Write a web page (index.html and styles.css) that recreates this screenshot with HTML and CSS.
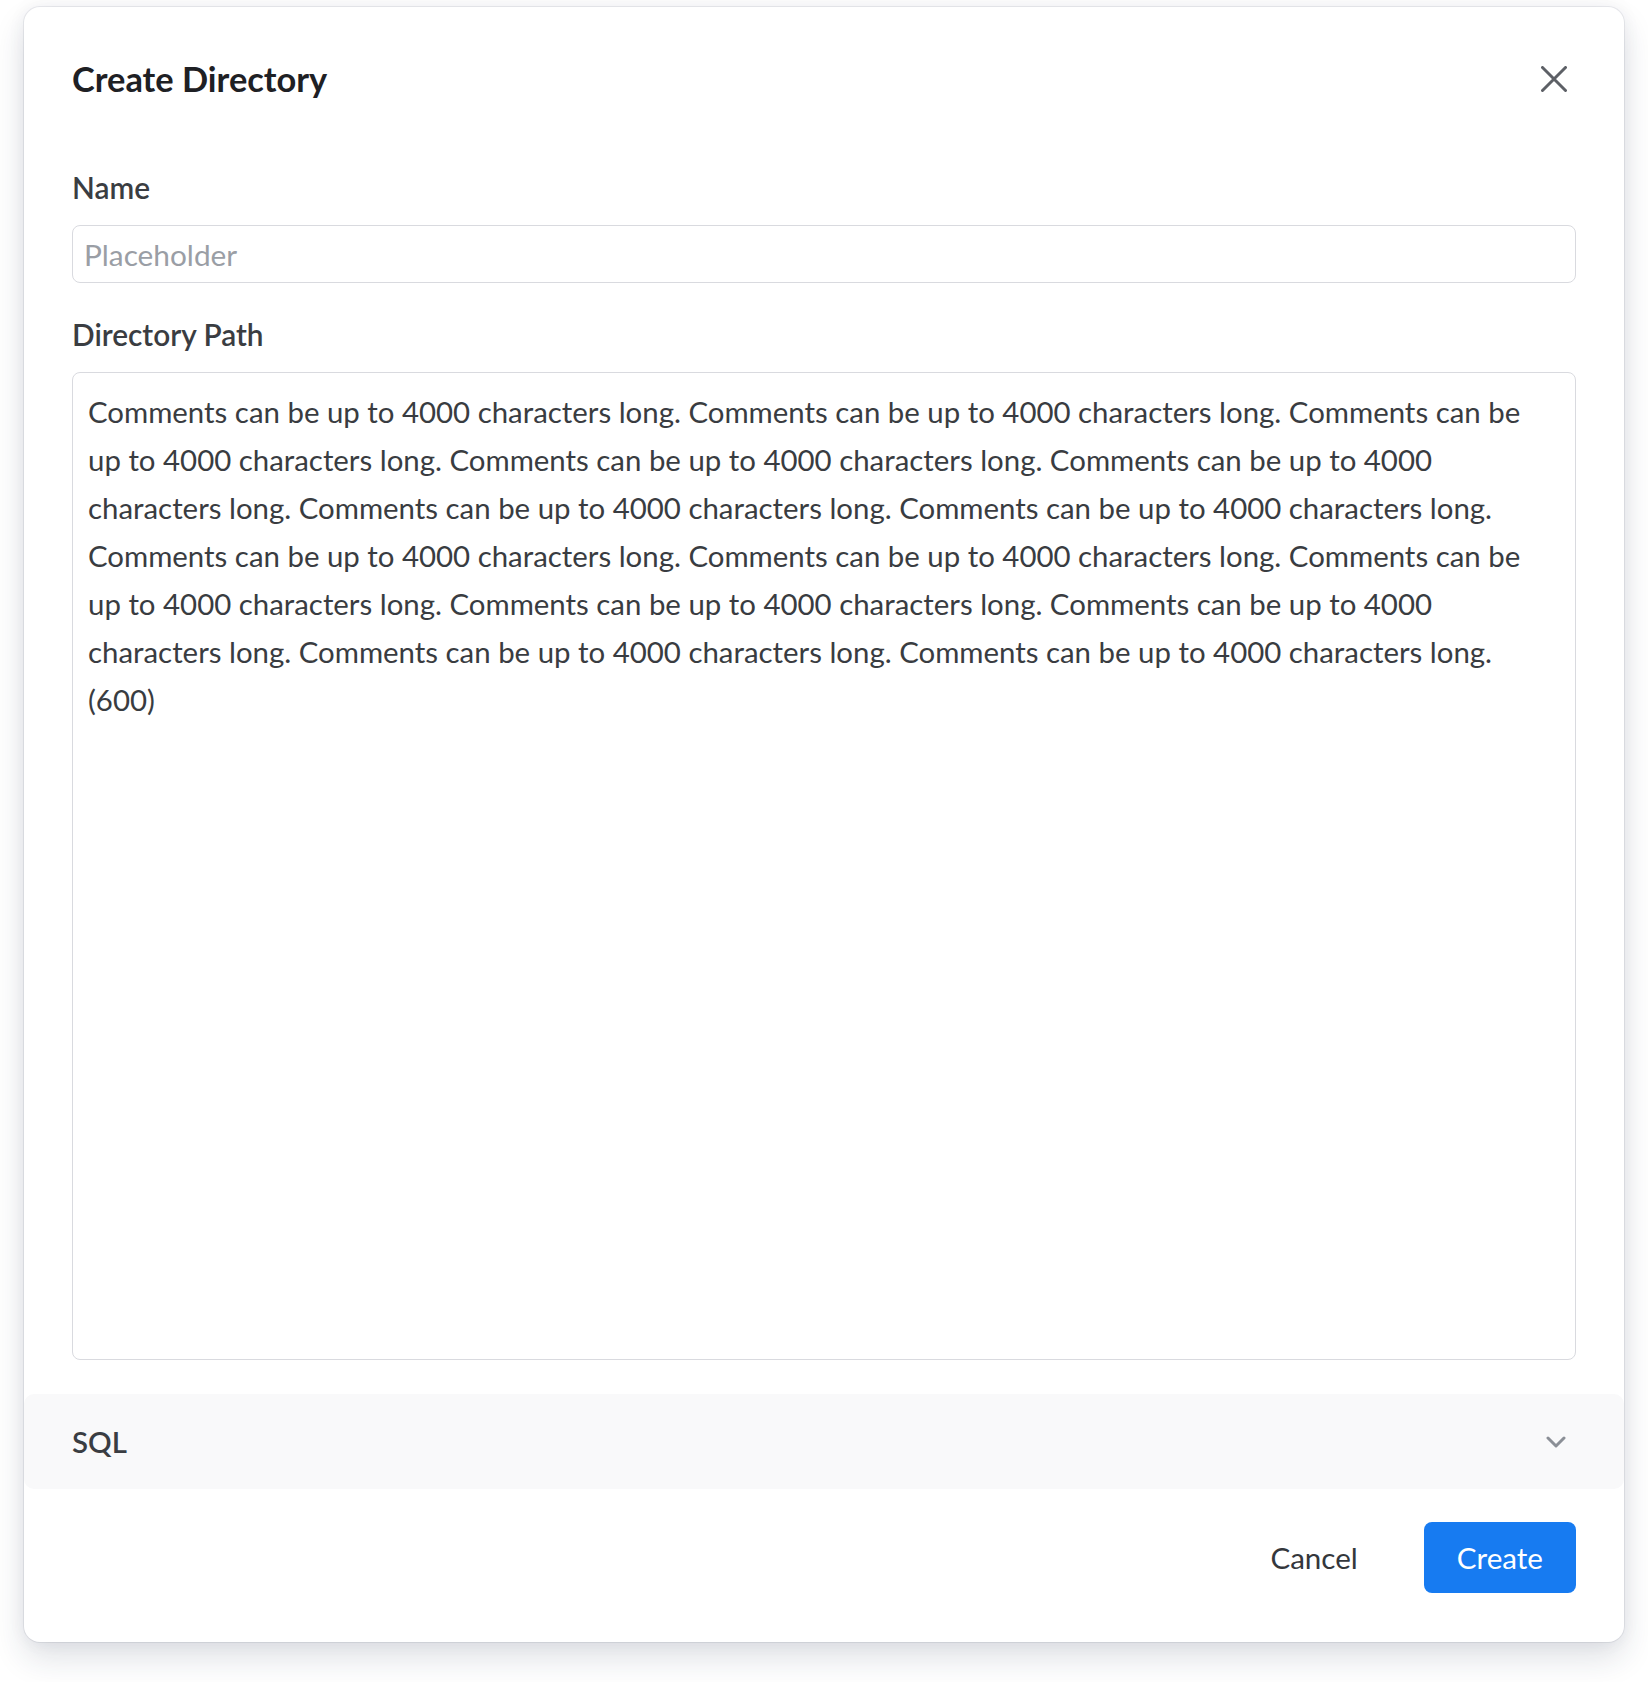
FILE: index.html
```html
<!DOCTYPE html>
<html lang="en">
<head>
<meta charset="utf-8">
<title>Create Directory</title>
<link rel="stylesheet" href="styles.css">
</head>
<body>
<div class="modal">
  <div class="modal-header">
    <h2 class="modal-title">Create Directory</h2>
    <button class="close-btn" type="button" aria-label="Close">
      <svg width="26" height="26" viewBox="0 0 26 26" fill="none" stroke="currentColor" stroke-width="3" stroke-linecap="round">
        <path d="M1.5 1.5 L24.5 24.5 M24.5 1.5 L1.5 24.5"/>
      </svg>
    </button>
  </div>
  <div class="modal-body">
    <label class="field-label" for="name">Name</label>
    <input class="text-input" id="name" type="text" placeholder="Placeholder">
    <label class="field-label field-label-spaced">Directory Path</label>
    <div class="text-area">Comments can be up to 4000 characters long. Comments can be up to 4000 characters long. Comments can be<br>up to 4000 characters long. Comments can be up to 4000 characters long. Comments can be up to 4000<br>characters long. Comments can be up to 4000 characters long. Comments can be up to 4000 characters long.<br>Comments can be up to 4000 characters long. Comments can be up to 4000 characters long. Comments can be<br>up to 4000 characters long. Comments can be up to 4000 characters long. Comments can be up to 4000<br>characters long. Comments can be up to 4000 characters long. Comments can be up to 4000 characters long.<br>(600)</div>
  </div>
  <div class="accordion">
    <span class="accordion-title">SQL</span>
    <span class="accordion-icon">
      <svg width="20" height="12" viewBox="0 0 20 12" fill="none" stroke="currentColor" stroke-width="3" stroke-linecap="round" stroke-linejoin="round">
        <path d="M2 2 L10 10 L18 2"/>
      </svg>
    </span>
  </div>
  <div class="modal-footer">
    <button class="btn btn-ghost" type="button">Cancel</button>
    <button class="btn btn-primary" type="button">Create</button>
  </div>
</div>
</body>
</html>
```
FILE: styles.css
```css
* { box-sizing: border-box; }

html, body {
  margin: 0;
  background: #ffffff;
}

body {
  min-height: 1682px;
  padding: 7px 24px 0;
  font-family: "Lato", "Noto Sans", sans-serif;
  color: #3a3d42;
}

.modal {
  width: 1600px;
  height: 1635px;
  background: #ffffff;
  border-radius: 16px;
  box-shadow:
    0 0 0 1px rgba(20, 30, 50, 0.07),
    0 16px 32px rgba(30, 40, 70, 0.14),
    0 0 18px rgba(30, 40, 70, 0.06);
  display: flex;
  flex-direction: column;
}

.modal-header {
  display: flex;
  align-items: center;
  justify-content: space-between;
  padding: 48px 48px 0;
  height: 96px;
}

.modal-title {
  margin: 0;
  font-size: 34.4px;
  line-height: 48px;
  font-weight: 700;
  color: #1e2024;
}

.close-btn {
  width: 44px;
  height: 44px;
  padding: 0;
  border: 0;
  background: transparent;
  color: #5d6066;
  display: flex;
  align-items: center;
  justify-content: center;
  cursor: pointer;
}

.modal-body {
  padding: 65px 48px 0;
  display: flex;
  flex-direction: column;
  flex: 1;
}

.field-label {
  display: block;
  font-size: 29.8px;
  line-height: 40px;
  font-weight: 600;
  color: #3a3d42;
  margin-bottom: 17px;
}

.field-label-spaced {
  margin-top: 32px;
}

.text-input {
  width: 100%;
  height: 58px;
  padding: 0 11px;
  border: 1.5px solid #d9dadf;
  border-radius: 8px;
  font-family: inherit;
  font-size: 29.8px;
  color: #3a3d42;
  background: #fff;
  outline: none;
}

.text-input::placeholder {
  color: #9a9ea5;
}

.text-area {
  height: 988px;
  border: 1.5px solid #d9dadf;
  border-radius: 8px;
  padding: 15px 15px;
  font-size: 29.4px;
  line-height: 48px;
  color: #393c41;
  white-space: nowrap;
  overflow: hidden;
}

.accordion {
  margin-top: 34px;
  height: 95px;
  background: #f9f9fa;
  border-radius: 10px;
  display: flex;
  align-items: center;
  justify-content: space-between;
  padding: 0 48px;
}

.accordion-title {
  font-size: 29.4px;
  font-weight: 600;
  color: #3a3d42;
}

.accordion-icon {
  width: 40px;
  display: flex;
  justify-content: center;
  color: #8b8f96;
}

.modal-footer {
  display: flex;
  justify-content: flex-end;
  align-items: center;
  gap: 33px;
  padding: 33px 48px 49px;
}

.btn {
  height: 71px;
  padding: 0 33px;
  border: 0;
  border-radius: 8px;
  font-family: inherit;
  font-size: 29.6px;
  cursor: pointer;
}

.btn-ghost {
  background: transparent;
  color: #34373c;
}

.btn-primary {
  background: #177bf1;
  color: #ffffff;
}
```
